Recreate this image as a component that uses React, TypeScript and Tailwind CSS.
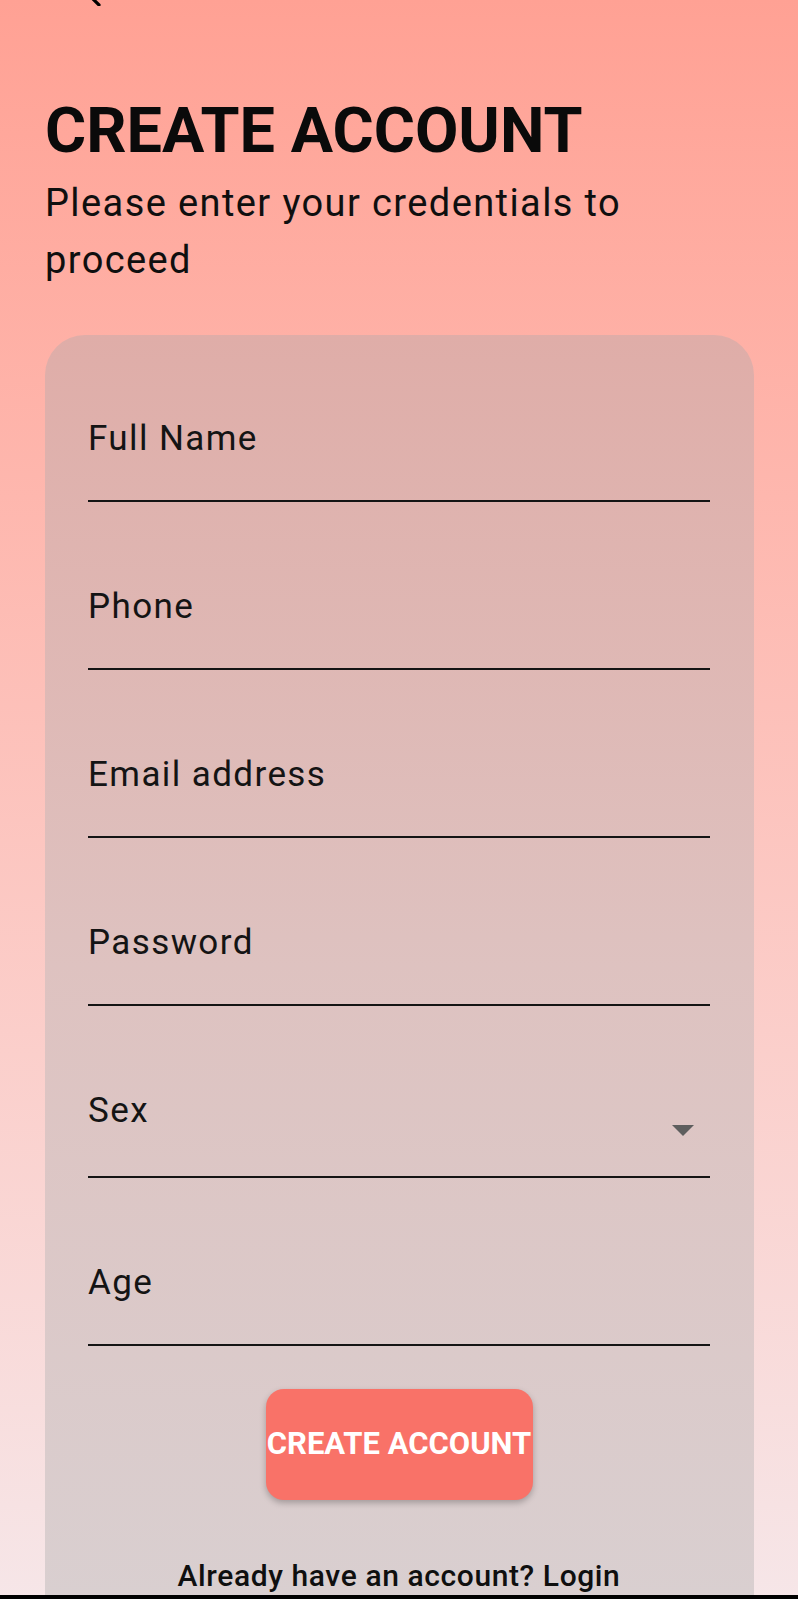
const fields = ["Full Name", "Phone", "Email address", "Password", "Sex", "Age"];

const Field = ({ label }: { label: string }) => {
  const isSelect = label === "Sex";
  return (
    <div className="flex items-start border-b-2 border-[#141414] pb-[40px]">
      <span className="text-[35px] leading-[42px] tracking-[1.4px] text-[#141414]">
        {label}
      </span>
      {isSelect && (
        <svg
          className="ml-auto mr-[16px] mt-[35px]"
          width="22"
          height="11"
          viewBox="0 0 22 11"
        >
          <polygon points="0,0 22,0 11,11" fill="#5e5e5e" />
        </svg>
      )}
    </div>
  );
};

export default function App() {
  return (
    <div
      className="flex h-[1599px] w-full flex-col overflow-hidden bg-gradient-to-b from-[#ffa194] to-[#f6e6e8] text-black"
      style={{ fontFamily: "Roboto, 'Liberation Sans', sans-serif" }}
    >
      {/* back icon, mostly cut off at the top */}
      <div className="h-[6px] pl-[87px]">
        <svg width="16" height="6" viewBox="0 0 16 6">
          <line x1="0" y1="-7" x2="12" y2="5" stroke="#000" strokeWidth="3.2" strokeLinecap="round" />
        </svg>
      </div>

      <div className="flex flex-1 flex-col pl-[45px] pr-[44px]">
        <h1 className="mt-[88px] text-[63px] font-bold leading-[74px] text-[#0a0a0a]">
          CREATE ACCOUNT
        </h1>
        <p className="mt-[7px] max-w-[660px] text-[38px] leading-[57px] tracking-[1.4px] text-[#0f0f0f]">
          Please enter your credentials to proceed
        </p>

        <div className="mt-[46px] flex flex-1 flex-col rounded-t-[40px] bg-gradient-to-b from-[#dfada8] via-[#dec2c0] to-[#d9cfd0] pl-[43px] pr-[44px] pt-[83px]">
          <div className="flex flex-col gap-[84px]">
            {fields.map((f) => (
              <Field key={f} label={f} />
            ))}
          </div>

          <div className="mt-[43px] flex justify-center">
            <button className="flex h-[111px] w-[267px] items-center justify-center whitespace-nowrap rounded-[18px] bg-[#f97268] text-[31px] font-bold text-white shadow-[0_3px_6px_rgba(0,0,0,0.25)]">
              CREATE ACCOUNT
            </button>
          </div>

          <p className="mt-[58px] text-center text-[30px] font-medium leading-[36px] tracking-[0.6px] text-[#0f0f0f]">
            Already have an account? Login
          </p>
        </div>
      </div>

      <div className="h-[4px] bg-black" />
    </div>
  );
}
